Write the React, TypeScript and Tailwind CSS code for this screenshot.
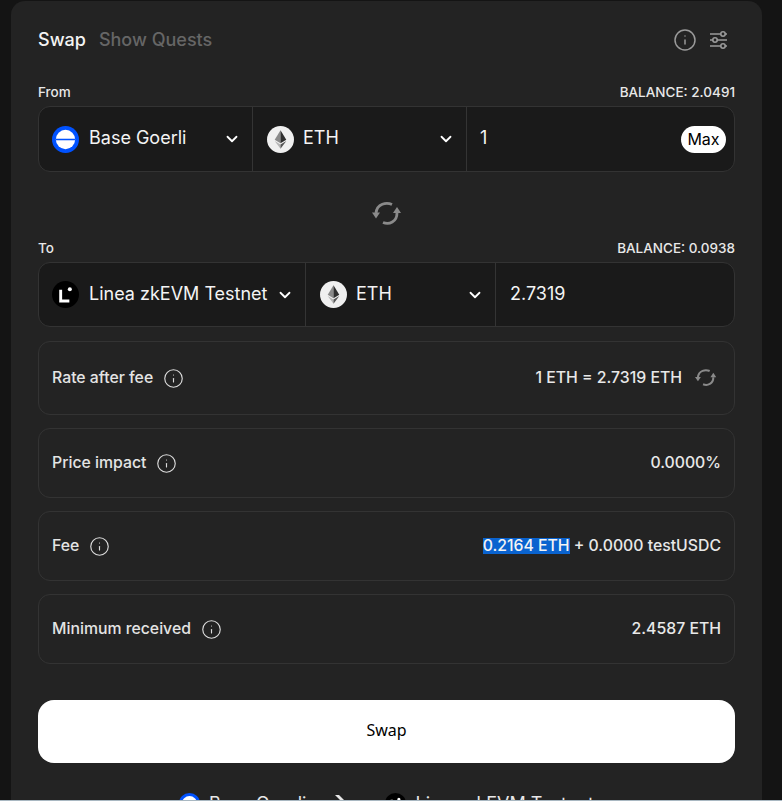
import type { ReactNode } from "react";
import { ChevronDown, Info } from "lucide-react";

function BaseLogo({ size = 27 }: { size?: number }) {
  return (
    <svg width={size} height={size} viewBox="0 0 28 28" className="shrink-0">
      <circle cx="14" cy="14" r="14" fill="#0052ff" />
      <circle cx="14" cy="14" r="10" fill="#ffffff" />
      <rect x="4" y="13.2" width="20" height="1.6" fill="#0052ff" />
    </svg>
  );
}

function LineaLogo({ size = 27 }: { size?: number }) {
  return (
    <svg width={size} height={size} viewBox="0 0 28 28" className="shrink-0">
      <circle cx="14" cy="14" r="14" fill="#000000" />
      <path d="M7.5 9h3v10.2h7.5v3h-10.500z" fill="#ffffff" />
      <circle cx="18.500" cy="8.500" r="2.100" fill="#ffffff" />
    </svg>
  );
}

function EthLogo() {
  return (
    <svg width="27" height="27" viewBox="0 0 28 28" className="shrink-0 ml-px -mr-px">
      <circle cx="14" cy="14" r="14" fill="#f0f0f0" />
      <path d="M14 4.500 8 14.300l6 3.500z" fill="#8a8a8a" />
      <path d="M14 4.500l6 9.800-6 3.500z" fill="#2f2f2f" />
      <path d="M8 15.600l6 8v-4.500z" fill="#b5b5b5" />
      <path d="M20 15.600l-6 8v-4.500z" fill="#555555" />
    </svg>
  );
}

function SwapArrows({ size = 30 }: { size?: number }) {
  return (
    <svg width={size} height={size} viewBox="0 0 30 30" fill="none" stroke="#8a8a8a" strokeWidth="2.800" className="shrink-0">
      <path d="M20 5.500C14.500 3 5 4.500 4 14" />
      <path d="M11 23.500C17 26 25 23 25 14" />
      <path d="M0 13.500h8l-4 6z" fill="#8a8a8a" stroke="none" />
      <path d="M21 14h8l-4-6z" fill="#8a8a8a" stroke="none" />
    </svg>
  );
}

function SlidersIcon() {
  return (
    <svg width="20" height="20" viewBox="0 0 20 20" fill="none" stroke="#9a9a9a" strokeWidth="1.600">
      <path d="M1 4h17M1 10h17M1 16h17" />
      <circle cx="14" cy="4" r="2.200" fill="#232323" />
      <circle cx="6" cy="10" r="2.200" fill="#232323" />
      <circle cx="14" cy="16" r="2.200" fill="#232323" />
    </svg>
  );
}

function Selector({
  icon,
  label,
  width,
}: {
  icon: ReactNode;
  label: string;
  width: string;
}) {
  return (
    <div className={`flex items-center pl-[13px] pr-[11px] border-r border-[#343434] ${width}`}>
      {icon}
      <span className="ml-[10px] pb-[3px] text-[18px] text-[#f4f4f4] whitespace-nowrap">{label}</span>
      <ChevronDown className="ml-auto w-[18px] h-[18px] text-white" strokeWidth={2.4} />
    </div>
  );
}

function FieldLabel({ left, right }: { left: string; right: string }) {
  return (
    <div className="flex items-end justify-between h-[27px] pb-[4px] text-[13.5px] font-medium text-[#e8e8e8]">
      <span>{left}</span>
      <span>{right}</span>
    </div>
  );
}

function InfoRow({
  label,
  height,
  children,
}: {
  label: string;
  height: string;
  children: ReactNode;
}) {
  return (
    <div className={`flex items-center justify-between px-[13px] rounded-[12px] border border-[#333333] ${height}`}>
      <div className="flex items-center gap-[10px]">
        <span className="text-[15.8px] font-medium text-[#e4e4e4]">{label}</span>
        <Info className="w-[21px] h-[21px] text-[#dddddd]" strokeWidth={1.300} />
      </div>
      <div className="flex items-center text-[15.8px] font-medium text-[#e8e8e8]">{children}</div>
    </div>
  );
}

export default function App() {
  return (
    <div
      className="h-[801px] overflow-hidden bg-[#141414] pt-px pl-[11px] border-b border-[#a9b8c2]"
      style={{ fontFamily: "Inter, 'Noto Sans', sans-serif" }}
    >
      <div className="w-[751px] min-h-[830px] rounded-t-[14px] bg-[#232323] px-[27px]">
        {/* Tabs */}
        <div className="flex items-center justify-between h-[78px]">
          <div className="flex items-center gap-[13px] pb-[2px] text-[18px] font-medium">
            <span className="text-[#f4f4f4]">Swap</span>
            <span className="text-[#666666]">Show Quests</span>
          </div>
          <div className="flex items-center gap-[12px] pr-[6px]">
            <Info className="w-[24px] h-[24px] text-[#9a9a9a]" strokeWidth={1.500} />
            <SlidersIcon />
          </div>
        </div>

        {/* From */}
        <FieldLabel left="From" right="BALANCE: 2.0491" />
        <div className="flex h-[66px] rounded-[12px] border border-[#333333] bg-[#1a1a1a]">
          <Selector icon={<BaseLogo />} label="Base Goerli" width="w-[214px]" />
          <Selector icon={<EthLogo />} label="ETH" width="w-[214px]" />
          <div className="flex flex-1 items-center justify-between pl-[13px] pr-[8px]">
            <span className="pb-[3px] text-[18px] text-[#f4f4f4]">1</span>
            <span className="flex items-center justify-center w-[45px] h-[27px] rounded-full bg-white text-[16px] text-black">
              Max
            </span>
          </div>
        </div>

        <div className="flex justify-center items-center h-[63px] pt-[21px]">
          <SwapArrows />
        </div>

        {/* To */}
        <FieldLabel left="To" right="BALANCE: 0.0938" />
        <div className="flex h-[65px] rounded-[12px] border border-[#333333] bg-[#1a1a1a]">
          <Selector icon={<LineaLogo />} label="Linea zkEVM Testnet" width="w-[267px]" />
          <Selector icon={<EthLogo />} label="ETH" width="w-[190px]" />
          <div className="flex flex-1 items-center pl-[14px]">
            <span className="pb-[3px] text-[18px] text-[#f4f4f4]">2.7319</span>
          </div>
        </div>

        {/* Details */}
        <div className="flex flex-col mt-[14px] gap-[13px]">
          <InfoRow label="Rate after fee" height="h-[74px]">
            <span>1 ETH = 2.7319 ETH</span>
            <span className="ml-[13px] mr-[4px]">
              <SwapArrows size={22} />
            </span>
          </InfoRow>
          <InfoRow label="Price impact" height="h-[70px]">
            <span>0.0000%</span>
          </InfoRow>
          <InfoRow label="Fee" height="h-[70px]">
            <span className="bg-[#0a63cf] text-[#f4f4f4] leading-[16px]">0.2164 ETH</span>
            <span className="whitespace-pre"> + 0.0000 testUSDC</span>
          </InfoRow>
          <InfoRow label="Minimum received" height="h-[70px]">
            <span>2.4587 ETH</span>
          </InfoRow>
        </div>

        <button
          className="block w-full h-[63px] mt-[36px] pb-[3px] rounded-[16px] bg-white text-[16px] text-black"
          style={{ fontFamily: "'Noto Sans', sans-serif" }}
        >
          Swap
        </button>

        {/* Route */}
        <div className="flex items-center justify-center gap-[9px] mt-[27px] text-[18px] text-[#e8e8e8]">
          <BaseLogo size={21} />
          <span>Base Goerli</span>
          <svg width="61" height="21" viewBox="0 0 61 21" className="shrink-0">
            <path d="M20 2h4l5 5h-4z" fill="#e8e8e8" />
          </svg>
          <LineaLogo size={21} />
          <span>Linea zkEVM Testnet</span>
        </div>
      </div>
    </div>
  );
}
